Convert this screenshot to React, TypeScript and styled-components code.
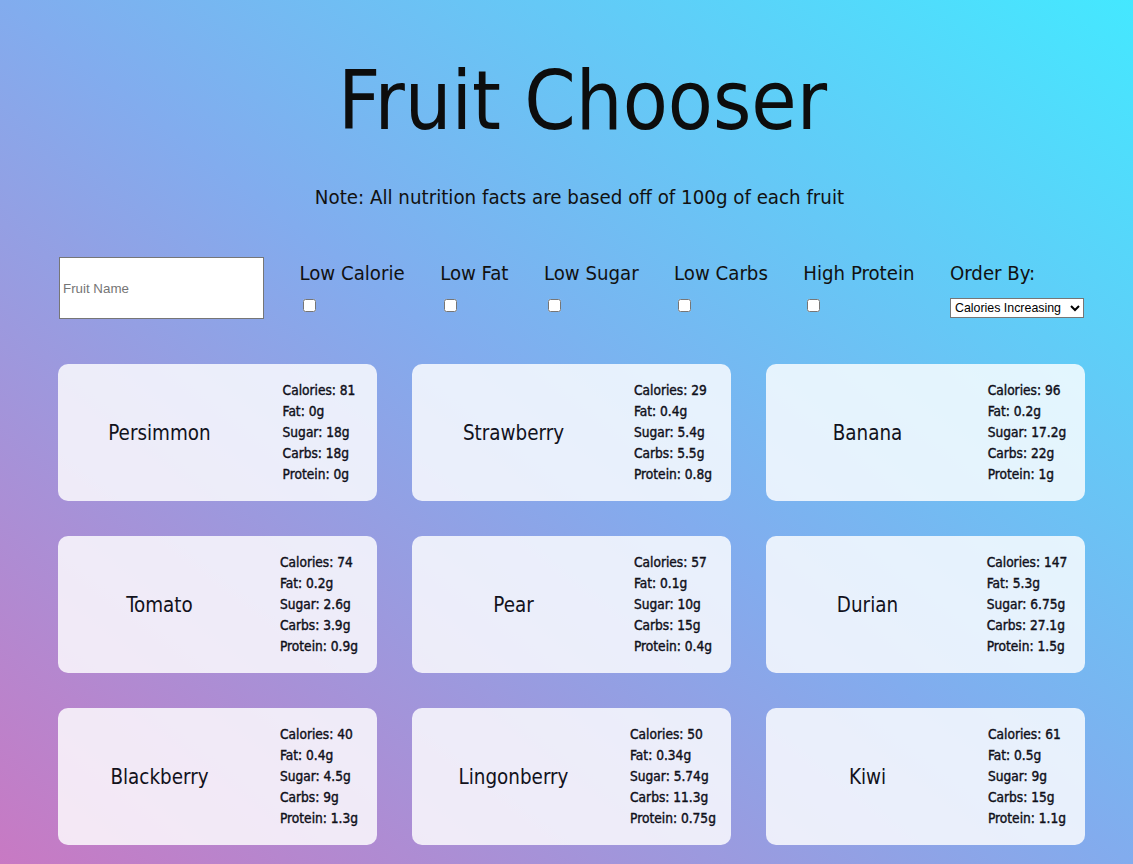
import React from 'react';
import styled, { createGlobalStyle } from 'styled-components';

const GlobalStyle = createGlobalStyle`
  html, body { margin: 0; padding: 0; }
  body {
    font-family: "DejaVu Sans Condensed", "DejaVu Sans", sans-serif;
    color: #111;
  }
  * { box-sizing: border-box; }
`;

const Page = styled.div`
  min-height: 100vh;
  background: linear-gradient(to top right, #c879c3 0%, #82acee 50%, #44e8ff 100%);
  padding: 60px 48px 19px 58px;
  display: flex;
  flex-direction: column;
`;

const Title = styled.h1`
  margin: 0;
  font-size: 82px;
  line-height: 82px;
  font-weight: normal;
  text-align: center;
  padding-left: 22px;
  color: #0d0d0d;
`;

const Note = styled.p`
  margin: 43px 0 0;
  font-size: 20.3px;
  line-height: 24px;
  text-align: center;
  padding-left: 16px;
`;

const Filters = styled.div`
  margin-top: 48px;
  display: flex;
  justify-content: space-between;
  align-items: flex-start;
  padding: 0 1px 0 1px;
`;

const SearchInput = styled.input`
  width: 205px;
  height: 62px;
  margin: 0;
  border: 1px solid #767676;
  background: #fff;
  font-family: "Liberation Sans", Arial, sans-serif;
  font-size: 13.33px;
  padding: 1px 3px;
  &::placeholder { color: #757575; }
`;

const FilterGroup = styled.div`
  display: flex;
  flex-direction: column;
  align-items: flex-start;
  padding-top: 4px;
`;

const FilterLabel = styled.label`
  font-size: 20.2px;
  line-height: 24px;
  white-space: nowrap;
`;

const Check = styled.input`
  width: 13px;
  height: 13px;
  margin: 14px 0 0 4px;
`;

const OrderSelect = styled.select`
  margin-top: 13px;
  width: 134px;
  font-family: "Liberation Sans", Arial, sans-serif;
  font-size: 12.4px;
  height: 20px;
  background: #fff;
  border: 1px solid #767676;
  color: #000;
  padding: 0;
`;

const Grid = styled.div`
  margin-top: 45px;
  display: grid;
  grid-template-columns: repeat(3, 319px);
  column-gap: 35px;
  row-gap: 35px;
`;

const Card = styled.div`
  height: 137px;
  border-radius: 10px;
  background: rgba(255, 255, 255, 0.82);
  display: grid;
  grid-template-columns: 203px 1fr;
  align-items: center;
`;

const FruitName = styled.div`
  text-align: center;
  font-size: 20.4px;
  color: #12121c;
`;

const FactsCol = styled.div`
  display: flex;
  justify-content: center;
`;

const Facts = styled.div`
  font-size: 13.6px;
  line-height: 21px;
  color: #10101a;
  -webkit-text-stroke: 0.4px #10101a;
  white-space: nowrap;
`;

type Fruit = { name: string; cal: number; fat: string; sugar: string; carbs: string; protein: string };

const fruits: Fruit[] = [
  { name: 'Persimmon', cal: 81, fat: '0g', sugar: '18g', carbs: '18g', protein: '0g' },
  { name: 'Strawberry', cal: 29, fat: '0.4g', sugar: '5.4g', carbs: '5.5g', protein: '0.8g' },
  { name: 'Banana', cal: 96, fat: '0.2g', sugar: '17.2g', carbs: '22g', protein: '1g' },
  { name: 'Tomato', cal: 74, fat: '0.2g', sugar: '2.6g', carbs: '3.9g', protein: '0.9g' },
  { name: 'Pear', cal: 57, fat: '0.1g', sugar: '10g', carbs: '15g', protein: '0.4g' },
  { name: 'Durian', cal: 147, fat: '5.3g', sugar: '6.75g', carbs: '27.1g', protein: '1.5g' },
  { name: 'Blackberry', cal: 40, fat: '0.4g', sugar: '4.5g', carbs: '9g', protein: '1.3g' },
  { name: 'Lingonberry', cal: 50, fat: '0.34g', sugar: '5.74g', carbs: '11.3g', protein: '0.75g' },
  { name: 'Kiwi', cal: 61, fat: '0.5g', sugar: '9g', carbs: '15g', protein: '1.1g' },
];

const filters = ['Low Calorie', 'Low Fat', 'Low Sugar', 'Low Carbs', 'High Protein'];

export default function App() {
  return (
    <>
      <GlobalStyle />
      <Page>
        <Title>Fruit Chooser</Title>
        <Note>Note: All nutrition facts are based off of 100g of each fruit</Note>
        <Filters>
          <SearchInput type="text" placeholder="Fruit Name" />
          {filters.map((f) => (
            <FilterGroup key={f}>
              <FilterLabel>{f}</FilterLabel>
              <Check type="checkbox" />
            </FilterGroup>
          ))}
          <FilterGroup>
            <FilterLabel>Order By:</FilterLabel>
            <OrderSelect defaultValue="ci">
              <option value="ci">Calories Increasing</option>
              <option value="cd">Calories Decreasing</option>
            </OrderSelect>
          </FilterGroup>
        </Filters>
        <Grid>
          {fruits.map((f) => (
            <Card key={f.name}>
              <FruitName>{f.name}</FruitName>
              <FactsCol>
                <Facts>
                  Calories: {f.cal}
                  <br />
                  Fat: {f.fat}
                  <br />
                  Sugar: {f.sugar}
                  <br />
                  Carbs: {f.carbs}
                  <br />
                  Protein: {f.protein}
                </Facts>
              </FactsCol>
            </Card>
          ))}
        </Grid>
      </Page>
    </>
  );
}
